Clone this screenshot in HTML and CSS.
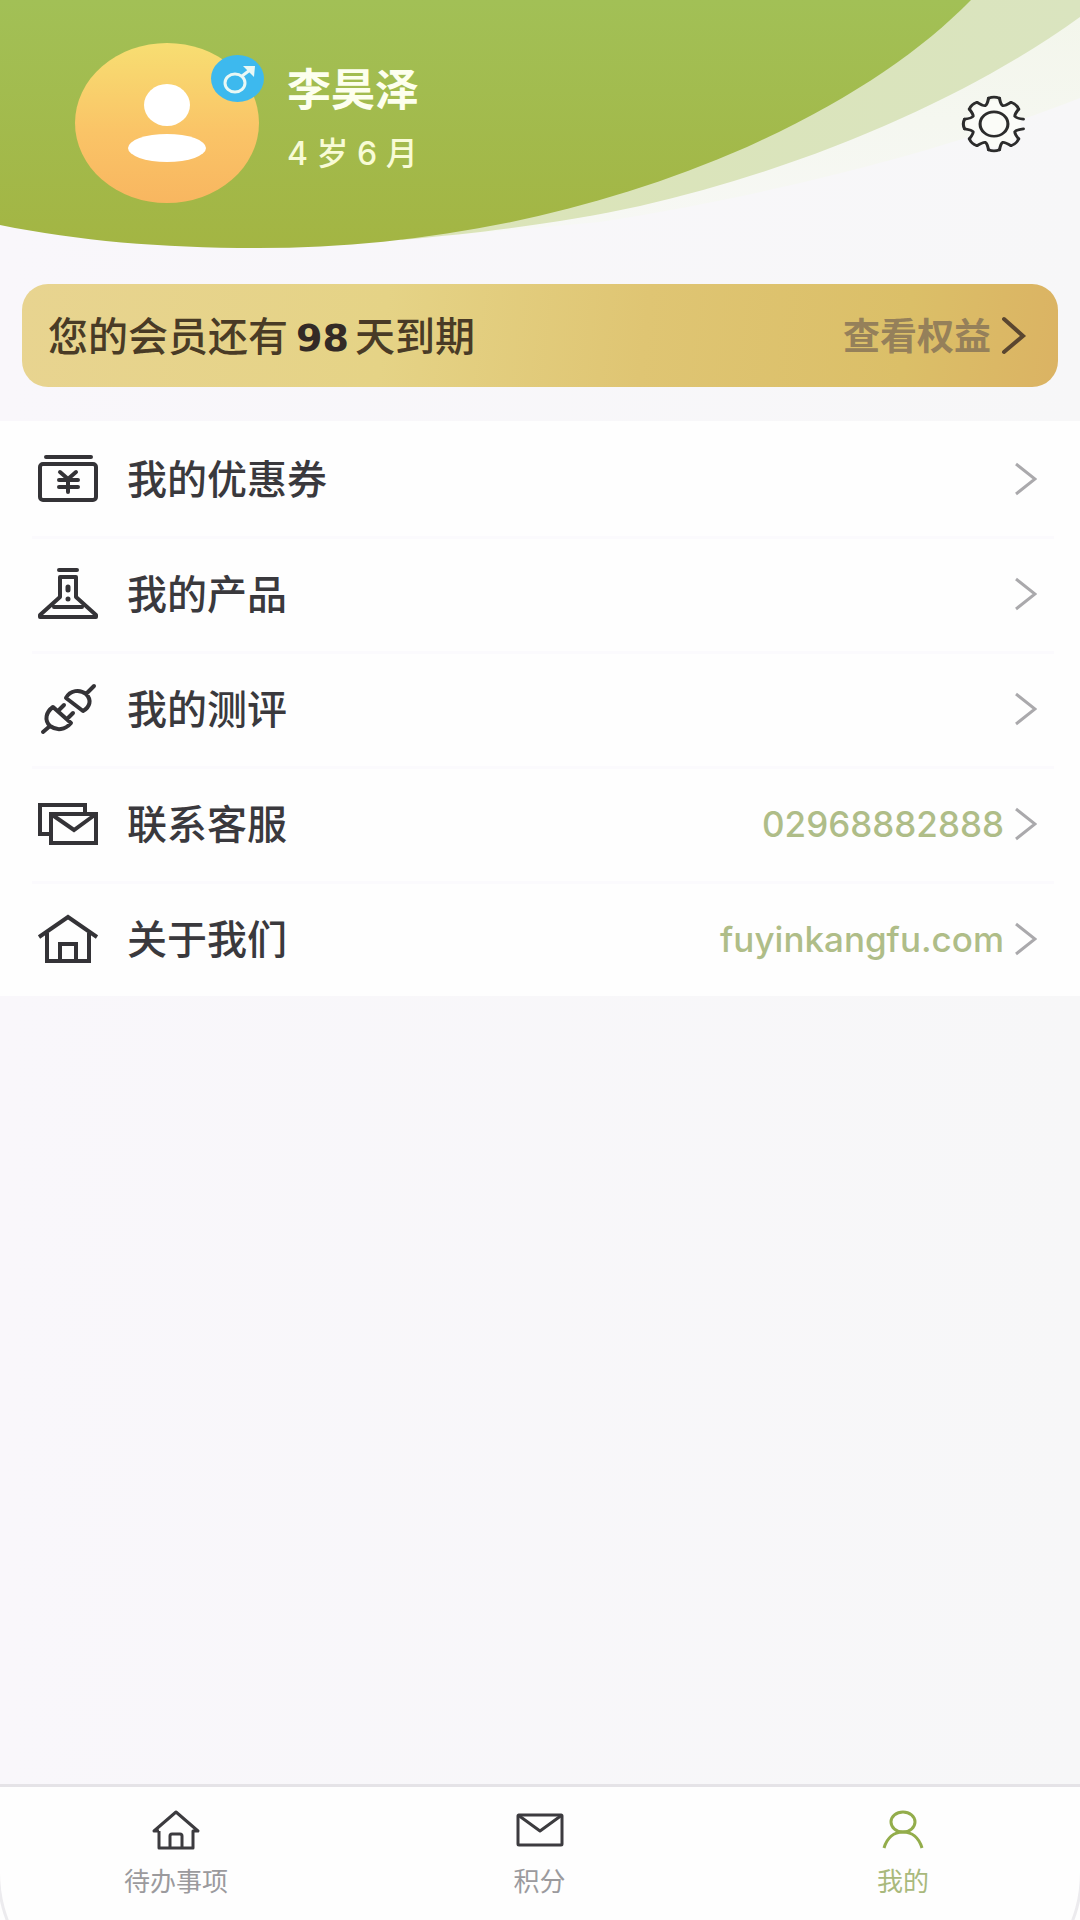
FILE: index.html
```html
<!DOCTYPE html>
<html lang="zh-CN">
<head>
<meta charset="utf-8">
<meta name="viewport" content="width=device-width, initial-scale=1">
<title>我的</title>
<link rel="stylesheet" href="styles.css">
</head>
<body>
<div class="app">
  <header class="hero">
    <svg class="hero-bg" viewBox="0 0 1080 250" preserveAspectRatio="none" aria-hidden="true">
      <defs>
        <linearGradient id="green" x1="0" y1="0" x2="0" y2="1">
          <stop offset="0" stop-color="#a2c056"/>
          <stop offset="1" stop-color="#a3b543"/>
        </linearGradient>
        <linearGradient id="band" x1="0" y1="0" x2="1" y2="0">
          <stop offset="0" stop-color="#dbe4b8"/>
          <stop offset="1" stop-color="#dae4bf"/>
        </linearGradient>
        <linearGradient id="faint" x1="0" y1="0" x2="0" y2="1">
          <stop offset="0" stop-color="#f3f6eb"/>
          <stop offset="1" stop-color="#f7f8f5"/>
        </linearGradient>
      </defs>
      <path fill="url(#faint)" d="M1080 0V98C960 145 800 190 600 222L400 240Z"/>
      <path fill="url(#band)" d="M960 0H1080V17C980 90 820 165 640 206C570 221 500 231 400 240Z"/>
      <path fill="url(#green)" d="M0 0H971C920 52 850 100 747 147C590 216 420 248 258 248C160 248 80 241 0 225Z"/>
    </svg>
    <div class="profile">
      <div class="avatar">
        <svg class="avatar-img" viewBox="0 0 184 160" preserveAspectRatio="none" role="img" aria-label="头像">
          <defs>
            <linearGradient id="sun" x1="0" y1="0" x2="0" y2="1">
              <stop offset="0" stop-color="#f7de72"/>
              <stop offset=".55" stop-color="#fac467"/>
              <stop offset="1" stop-color="#f8b660"/>
            </linearGradient>
          </defs>
          <ellipse cx="92" cy="80" rx="92" ry="80" fill="url(#sun)"/>
          <ellipse cx="92" cy="62" rx="23" ry="21" fill="#fff"/>
          <ellipse cx="92" cy="105" rx="39" ry="14" fill="#fff"/>
        </svg>
        <svg class="gender" viewBox="0 0 53 47" role="img" aria-label="男">
          <ellipse cx="26.5" cy="23.5" rx="26.5" ry="23.5" fill="#3db9ee"/>
          <ellipse cx="24" cy="28" rx="10" ry="9" fill="none" stroke="#e9f8f5" stroke-width="3"/>
          <path d="M31 21L39 15" stroke="#e9f8f5" stroke-width="3"/>
          <path d="M32 11L44 11L43 22Z" fill="#e9f8f5"/>
        </svg>
      </div>
      <div class="who">
        <h1 class="name">李昊泽</h1>
        <p class="age">4 岁 6 月</p>
      </div>
    </div>
    <button class="settings" type="button" aria-label="设置">
      <svg class="gear" viewBox="-32 -32 64 64" preserveAspectRatio="none" aria-hidden="true">
        <defs>
          <path id="valley" d="M5.3 -28.5Q6.5 -21.5 8.4 -20.3Q10.6 -19.8 16.4 -23.9"/>
          <path id="tooth" d="M-5.3 -28.5Q0 -31 5.3 -28.5"/>
        </defs>
        <circle r="26" fill="#fbfcf8"/>
        <g fill="none" stroke="#2c2c2c" stroke-width="3" stroke-linecap="round">
          <use href="#valley"/>
          <use href="#valley" transform="rotate(45)"/>
          <use href="#valley" transform="rotate(90)"/>
          <use href="#valley" transform="rotate(135)"/>
          <use href="#valley" transform="rotate(180)"/>
          <use href="#valley" transform="rotate(225)"/>
          <use href="#valley" transform="rotate(270)"/>
          <use href="#valley" transform="rotate(315)"/>
          <use href="#tooth"/>
          <use href="#tooth" transform="rotate(45)"/>
          <use href="#tooth" transform="rotate(135)"/>
          <use href="#tooth" transform="rotate(180)"/>
          <use href="#tooth" transform="rotate(225)"/>
          <use href="#tooth" transform="rotate(270)"/>
          <use href="#tooth" transform="rotate(315)"/>
          <circle r="13.5"/>
        </g>
      </svg>
    </button>
  </header>

  <main class="main">
    <a class="member" href="#benefits">
      <span class="member-text">您的会员还有<b class="days">98</b>天到期</span>
      <span class="member-link">查看权益</span>
      <svg class="member-arrow" viewBox="0 0 26 40" aria-hidden="true"><path d="M3 3L22 20L3 36"/></svg>
    </a>

    <nav class="list" aria-label="我的服务">
      <a class="row" href="#coupons">
        <svg class="icon" viewBox="0 0 60 56" aria-hidden="true"><rect x="2" y="13" width="56" height="36" rx="3"/><path d="M8 6H53M22 21L30 28L38 21M30 28V41M21 29H40M21 36H40"/></svg>
        <span class="label">我的优惠券</span>
        <svg class="arrow" viewBox="0 0 22 34" aria-hidden="true"><path d="M1 2L20 17L1 32"/></svg>
      </a>
      <a class="row" href="#products">
        <svg class="icon" viewBox="0 0 60 56" aria-hidden="true"><path d="M21 4H39M22 11H38V31L58 49V51H2V49L22 31ZM16 41H44"/><path stroke-width="5" d="M30 21V24M30 33V33"/></svg>
        <span class="label">我的产品</span>
        <svg class="arrow" viewBox="0 0 22 34" aria-hidden="true"><path d="M1 2L20 17L1 32"/></svg>
      </a>
      <a class="row" href="#tests">
        <svg class="icon" viewBox="0 0 60 56" aria-hidden="true"><path d="M28 17C32 9 42 8 48 13C54 19 52 26 45 30ZM48 13L56 5M15 26L33 42C27 49 19 50 12 45C6 39 8 31 15 26ZM20 30L26 24M29 38L35 32M12 45L5 51"/></svg>
        <span class="label">我的测评</span>
        <svg class="arrow" viewBox="0 0 22 34" aria-hidden="true"><path d="M1 2L20 17L1 32"/></svg>
      </a>
      <a class="row" href="tel:02968882888">
        <svg class="icon square" viewBox="0 0 60 56" aria-hidden="true"><path d="M47 16V9H2V38H12M13 18H58V47H13ZM13 18L36 34L58 18"/></svg>
        <span class="label">联系客服</span>
        <span class="value">02968882888</span>
        <svg class="arrow" viewBox="0 0 22 34" aria-hidden="true"><path d="M1 2L20 17L1 32"/></svg>
      </a>
      <a class="row" href="#about">
        <svg class="icon square" viewBox="0 0 60 56" aria-hidden="true"><path d="M1 26L30 6L59 26M9 22V50H51V22M22 49V33H38V49"/></svg>
        <span class="label">关于我们</span>
        <span class="value">fuyinkangfu.com</span>
        <svg class="arrow" viewBox="0 0 22 34" aria-hidden="true"><path d="M1 2L20 17L1 32"/></svg>
      </a>
    </nav>
  </main>

  <nav class="tabs" aria-label="主导航">
    <a class="tab" href="#todo">
      <svg class="tab-icon" viewBox="0 0 50 44" aria-hidden="true"><path d="M8 23H3L25 4L47 23H42V40H8V23M19 40V28Q19 26 21 26H29Q31 26 31 28V40"/></svg>
      <span>待办事项</span>
    </a>
    <a class="tab" href="#points">
      <svg class="tab-icon" viewBox="0 0 50 44" aria-hidden="true"><rect x="3" y="7" width="44" height="30" rx="1"/><path d="M3 7L25 23L47 7"/></svg>
      <span>积分</span>
    </a>
    <a class="tab active" href="#me" aria-current="page">
      <svg class="tab-icon" viewBox="0 0 50 44" aria-hidden="true"><ellipse cx="25" cy="14" rx="12" ry="10"/><path d="M6 40C9 30 16 24 25 24S41 30 44 40"/></svg>
      <span>我的</span>
    </a>
  </nav>
</div>
</body>
</html>
```
FILE: styles.css
```css
* {
  box-sizing: border-box;
}

body {
  margin: 0;
  font-family: "Liberation Sans", "Noto Sans CJK SC", sans-serif;
  color: #3a393d;
}

a {
  color: inherit;
  text-decoration: none;
}

svg {
  display: block;
  flex: none;
}

.app {
  display: flex;
  flex-direction: column;
  min-height: 100vh;
  background: linear-gradient(90deg, #f9f7fb, #f7f7f8);
}

/* Profile header */
.hero {
  position: relative;
  display: flex;
  justify-content: space-between;
  align-items: flex-start;
  min-height: 250px;
  padding: 43px 53px 0 75px;
}

.hero-bg {
  position: absolute;
  inset: 0;
  width: 100%;
  height: 100%;
}

.profile {
  position: relative;
  display: flex;
  gap: 28px;
}

.avatar {
  position: relative;
}

.avatar-img {
  width: 184px;
  height: 160px;
}

.gender {
  position: absolute;
  top: 12px;
  right: -5px;
  width: 53px;
  height: 47px;
}

.who {
  display: flex;
  flex-direction: column;
  gap: 11px;
  padding-top: 22px;
}

.name,
.age {
  margin: 0;
  line-height: 52px;
}

.name {
  font-size: 44px;
  font-weight: 700;
  color: #fdffee;
}

.age {
  font-family: Inter, "Noto Sans CJK SC", sans-serif;
  font-size: 32px;
  font-weight: 500;
  color: #f8fbd6;
}

.settings {
  position: relative;
  margin: 52px 0 0;
  padding: 0;
  border: 0;
  background: none;
}

.gear {
  width: 66px;
  height: 58px;
}

.main {
  flex: 1;
}

/* Membership banner */
.member {
  display: flex;
  align-items: center;
  height: 103px;
  margin: 34px 22px;
  padding: 0 31px 0 26px;
  border-radius: 26px;
  background: linear-gradient(97deg, #e8d490, #e5d386 35%, #dfc573 60%, #dbbf68 85%, #dbb363);
}

.member-text,
.member-link,
.label {
  padding-bottom: 4px;
}

.member-text {
  flex: 1;
  font-size: 40px;
  font-weight: 500;
  color: #493b26;
}

.days {
  margin: 0 6px 0 8px;
  font-family: "DejaVu Sans", sans-serif;
  font-size: 38px;
  font-weight: 700;
  color: #332a26;
}

.member-link {
  margin-right: 10px;
  font-size: 37px;
  font-weight: 700;
  color: #95805a;
}

.member-arrow {
  width: 26px;
  height: 40px;
  fill: none;
  stroke: #5a4630;
  stroke-width: 4;
  stroke-linecap: round;
}

/* Service list */
.list {
  background: #fefefe;
}

.row {
  display: flex;
  align-items: center;
  height: 115px;
  padding: 0 43px 0 38px;
}

.row + .row {
  background: linear-gradient(#fbfafd, #fbfafd) 32px 0 / calc(100% - 58px) 3px no-repeat;
}

.icon {
  width: 60px;
  height: 56px;
  fill: none;
  stroke: #343337;
  stroke-width: 4;
  stroke-linecap: round;
  stroke-linejoin: round;
}

.square {
  stroke-linecap: butt;
  stroke-linejoin: miter;
}

.label {
  flex: 1;
  margin-left: 29px;
  font-size: 40px;
  font-weight: 500;
}

.value {
  margin-right: 11px;
  font-family: Inter, sans-serif;
  font-size: 35px;
  font-weight: 500;
  color: #afbd88;
}

.arrow {
  width: 22px;
  height: 34px;
  fill: none;
  stroke: #aaa9ac;
  stroke-width: 3;
}

/* Bottom tabs */
.tabs {
  position: relative;
  display: flex;
  justify-content: space-between;
  overflow: hidden;
  height: 136px;
  padding: 21px 105px 0 104px;
  border-top: 3px solid #e5e3e7;
  background: #fefefe;
}

/* rounded lower corners of the bar */
.tabs::after {
  content: "";
  position: absolute;
  inset: 0 -3px -48px;
  border: 3px solid #ecebee;
  border-top: 0;
  border-radius: 0 0 64px 64px / 0 0 96px 96px;
  pointer-events: none;
}

.tab {
  display: flex;
  flex-direction: column;
  align-items: center;
  gap: 12px;
  width: 144px;
  font-size: 26px;
  line-height: 36px;
  color: #9b9a9d;
}

.tab-icon {
  width: 50px;
  height: 44px;
  fill: none;
  stroke: #3c3b3f;
  stroke-width: 3;
  stroke-linejoin: round;
}

.active {
  color: #a9b97c;
}

.active .tab-icon {
  stroke: #93ad4b;
}
```
